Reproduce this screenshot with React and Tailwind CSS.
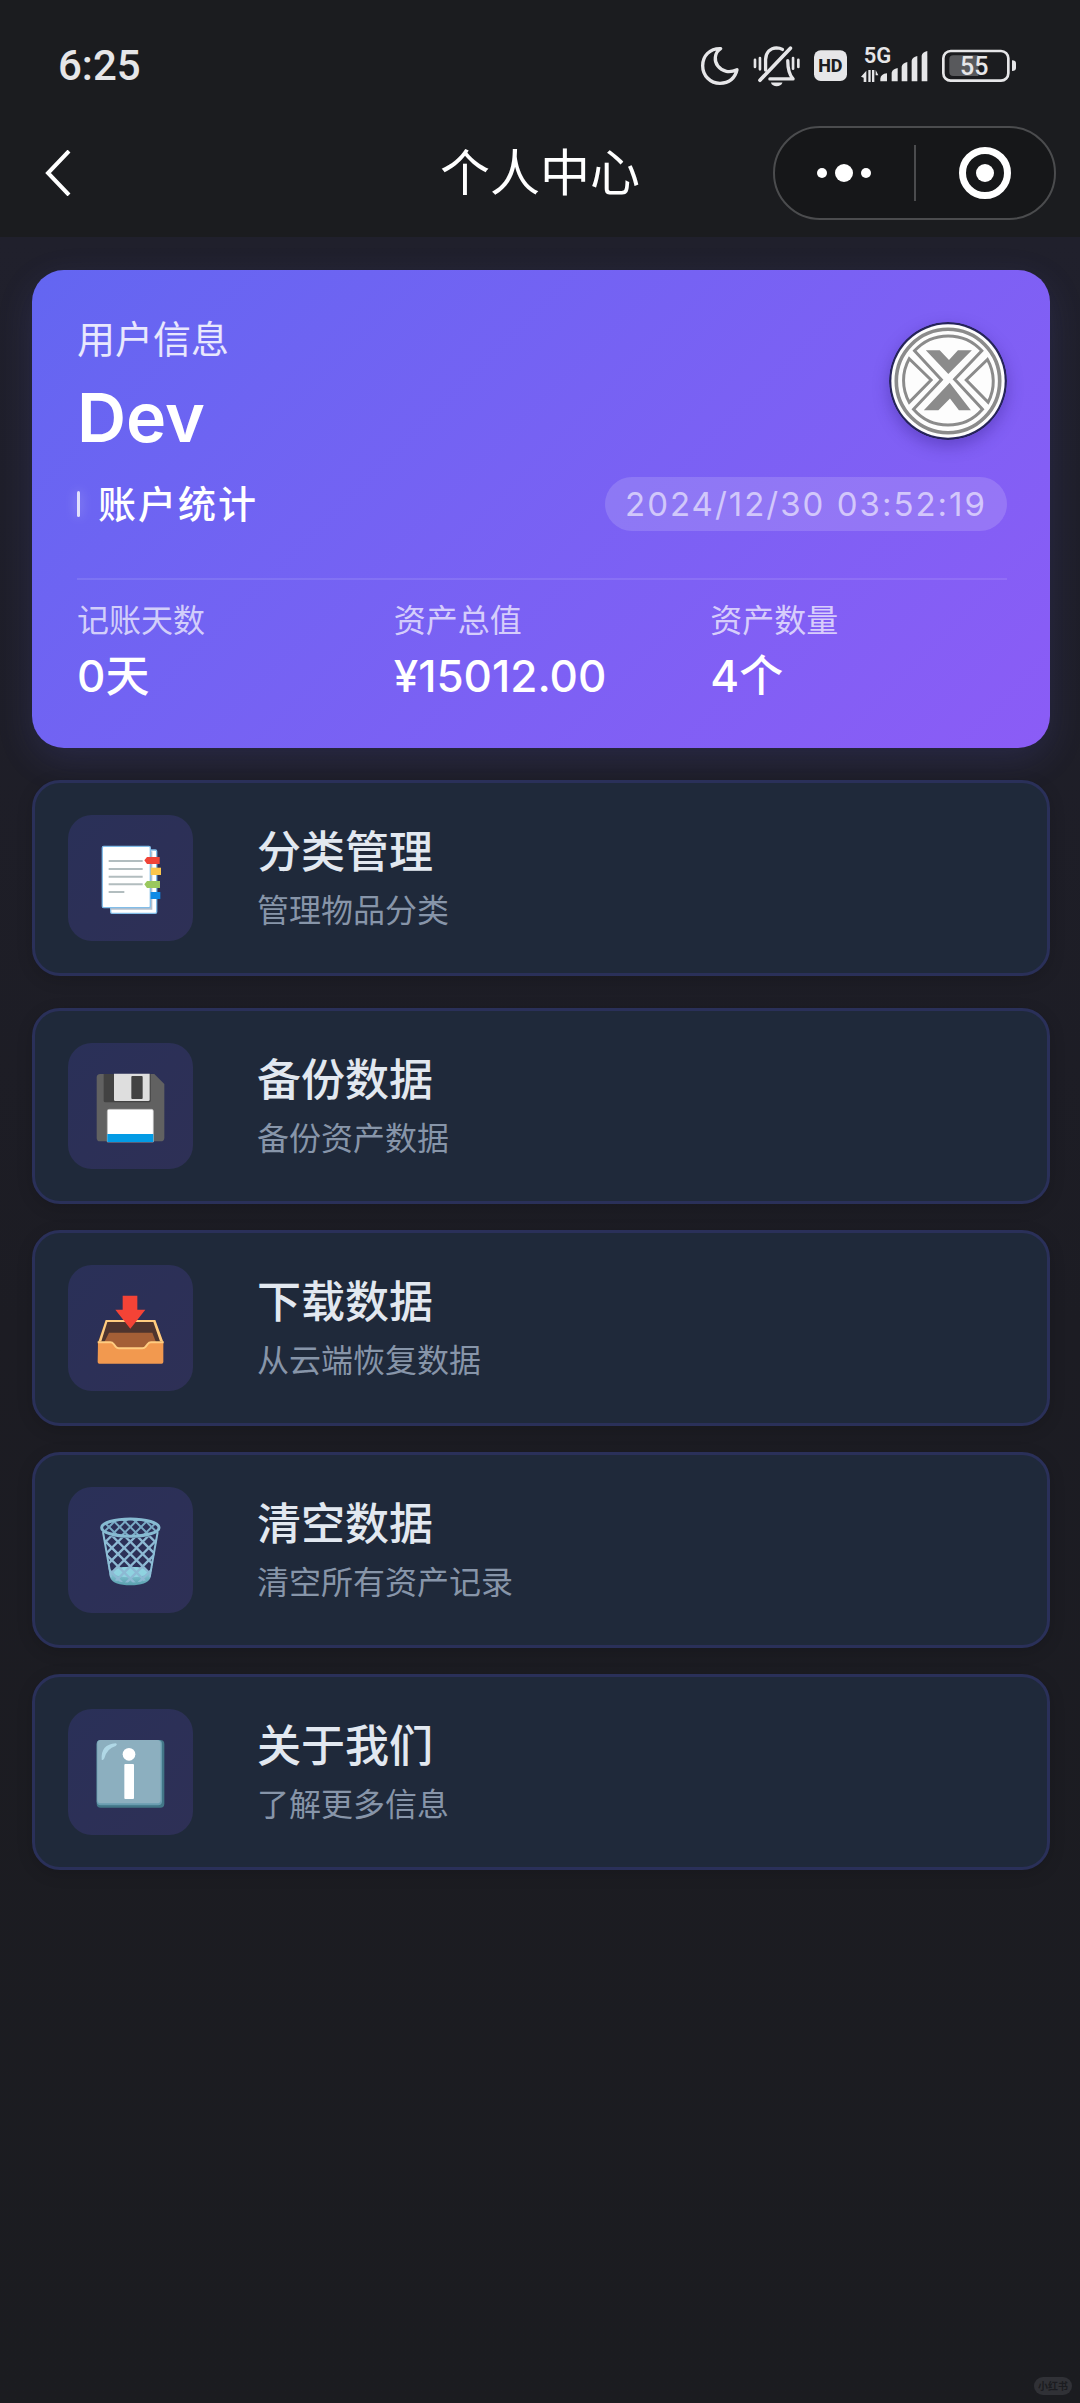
// App.jsx
import React from 'react';

const FG = "#e6e6e8";

function StatusBar() {
  return (
    <div className="flex h-[126px] items-center justify-between pt-1.5 pr-16 pl-[58px] font-['Roboto',sans-serif]">
      <span className="text-[42px] leading-none font-medium text-[#e6e6e8]">6:25</span>
      <div className="flex items-center gap-3.5">
        {/* Do not disturb */}
        <svg className="h-[41px] w-[38px]" viewBox="122 78 114 123" fill="none" stroke={FG} strokeWidth="10" strokeLinejoin="round">
          <path d="M181 86 C148 85 127 108 127 137 C127 167 150 190 179 190 C206 190 225 174 230 149 C219 154 207 156 198 154 C176 149 163 131 165 112 C166 101 171 92 181 86 Z" />
        </svg>
        {/* Muted bell */}
        <svg className="h-[41px] w-[47px]" viewBox="281 78 142 123" fill="none" stroke={FG} strokeWidth="10" strokeLinecap="round">
          <path d="M302 181 L394 84" strokeWidth="11" />
          <path d="M319 150 V118 C320 96 334 84 352 83 C359 83 365 85 370 88" />
          <path d="M332 177 H402 C392 166 386 150 386 122" strokeLinejoin="round" />
          <path d="M287 119 V141 M302 114 V148 M402 114 V146 M418 119 V141" strokeWidth="8" />
          <path d="M335 188 H370 C366 203 339 203 335 188 Z" fill={FG} stroke="none" />
        </svg>
        {/* HD voice */}
        <svg className="h-[41px] w-[33px]" viewBox="465 78 99 123">
          <rect x="465" y="91" width="99" height="92" rx="20" fill={FG} />
          <text x="514" y="156" textAnchor="middle" fontSize="54" fontWeight="800" fill="#1b1c20">HD</text>
        </svg>
        {/* Signal */}
        <svg className="h-[41px] w-[67px] overflow-visible" viewBox="602 78 201 123" fill={FG}>
          <text x="610" y="129" fontSize="66" fontWeight="600">5G</text>
          <path d="M618 152 V186 H610 V173 L602 170 Z M624 150 H631 V186 H624 Z M635 150 H642 V186 H635 Z M646 150 L654 166 H646 Z" />
          <path d="M660 184 V176 Q661 162 680 160 V184 Z" />
          <path d="M694 184 V158 Q696 147 712 144 V184 Z" />
          <path d="M724 184 V140 Q726 129 741 126 V184 Z" />
          <path d="M754 184 V122 Q756 111 771 108 V184 Z" />
          <path d="M784 184 V107 Q786 96 801 93 V184 Z" />
        </svg>
        {/* Battery */}
        <svg className="h-[41px] w-[74px]" viewBox="844 78 222 123">
          <rect x="848" y="93" width="195" height="89" rx="22" fill="none" stroke={FG} strokeWidth="8" />
          <path d="M878 106 H953 V168 H878 Q866 168 866 156 V118 Q866 106 878 106 Z" fill="#58595c" />
          <path d="M1054 121 Q1066 121 1066 130 V144 Q1066 153 1054 153 Z" fill={FG} />
          <text x="941" y="164" textAnchor="middle" fontSize="75" fontWeight="500" fill={FG}>55</text>
        </svg>
      </div>
    </div>
  );
}

function NavBar() {
  return (
    <div className="grid h-[94px] grid-cols-[1fr_auto_1fr] items-center px-6">
      <button aria-label="返回" className="justify-self-start px-5">
        <svg className="h-[46px] w-[27px]" viewBox="0 0 27 46" fill="none" stroke="#fff" strokeWidth="4">
          <path d="M25 1 L4 23 L25 45" />
        </svg>
      </button>
      <h1 className="text-[50px] leading-none text-white">个人中心</h1>
      <div className="flex h-[94px] w-[283px] items-center justify-self-end rounded-full border-2 border-[#4b4c4e] bg-[#161719]">
        <button aria-label="更多" className="flex flex-1 items-center justify-center gap-2">
          <span className="size-2.5 rounded-full bg-white"></span>
          <span className="size-[18px] rounded-full bg-white"></span>
          <span className="size-2.5 rounded-full bg-white"></span>
        </button>
        <span className="h-14 w-0.5 bg-[#4b4c4e]"></span>
        <button aria-label="关闭" className="flex flex-1 items-center justify-center">
          <span className="flex size-[52px] items-center justify-center rounded-full border-[7px] border-white">
            <span className="size-[18px] rounded-full bg-white"></span>
          </span>
        </button>
      </div>
    </div>
  );
}

function Avatar() {
  return (
    <svg className="mt-[7px] size-[118px] rounded-full shadow-[0_6px_16px_rgba(40,20,120,0.35)]" viewBox="54 35 356 356" fill="none" stroke="#8b8b8b" strokeWidth="9">
      <circle cx="232" cy="213" r="178" fill="#26245a" stroke="none" />
      <circle cx="232" cy="213" r="171" fill="#fdfdfd" stroke="none" />
      <circle cx="232" cy="213" r="156" strokeWidth="11" />
      <path d="M131 122 A137 137 0 0 1 334 122 L252 208 L336 298 A137 137 0 0 1 128 298 L212 209 Z" />
      <path d="M115 146 L181 210 L115 277 A134 134 0 0 1 115 146 Z" />
      <path d="M351 148 L287 210 L353 277 A134 134 0 0 0 351 148 Z" />
      <path d="M165 120 H207 L235 150 L262 120 H304 L233 192 Z" fill="#8b8b8b" stroke="none" />
      <path d="M159 301 L237 218 L301 301 H265 L238 266 L203 301 Z" fill="#8b8b8b" stroke="none" />
    </svg>
  );
}

const stats = [
  { label: "记账天数", value: "0天" },
  { label: "资产总值", value: "¥15012.00" },
  { label: "资产数量", value: "4个" },
];

function UserCard() {
  return (
    <section className="rounded-[32px] bg-linear-135 from-[#6366f1] to-[#8b5cf6] pt-[45px] pr-[43px] pb-[42px] pl-[45px] shadow-[0_12px_36px_rgba(99,102,241,0.15)]">
      <div className="flex items-start justify-between">
        <div>
          <p className="text-[38px] leading-[48px] text-white/85">用户信息</p>
          <p className="mt-3 text-[68px] leading-[84px] font-semibold text-white">Dev</p>
        </div>
        <Avatar />
      </div>
      <div className="mt-[18px] flex items-center justify-between">
        <h2 className="flex items-center gap-[18px] text-[38px] leading-[48px] font-medium tracking-[2px] text-white">
          <span className="h-[26px] w-[3px] rounded-full bg-white/80 shadow-[0_0_12px_rgba(255,255,255,0.4)]"></span>
          账户统计
        </h2>
        <time className="rounded-full bg-white/15 px-5 text-[33px] leading-[54px] tracking-[2px] text-white/60">2024/12/30 03:52:19</time>
      </div>
      <div className="mt-[47px] grid grid-cols-3 gap-5 border-t-2 border-white/10 pt-5">
        {stats.map((s) => (
          <div key={s.label}>
            <p className="text-[32px] leading-[42px] text-white/70">{s.label}</p>
            <p className="mt-1 text-[44px] leading-[60px] font-medium text-white">{s.value}</p>
          </div>
        ))}
      </div>
    </section>
  );
}

function TabsIcon() {
  return (
    <svg className="size-full" viewBox="143 135 375 378">
      <rect x="271" y="240" width="138" height="190" rx="4" fill="#fff" stroke="#82bde8" strokeWidth="4" />
      <path d="M389 244 H396 V419 H271 V413 H389 Z" fill="#b5bfcc" />
      <rect x="246" y="229" width="144" height="184" rx="4" fill="#fff" stroke="#82bde8" strokeWidth="4" />
      <path d="M265 273 H367 M265 297 H367 M265 320 H367 M265 343 H367 M265 366 H312" stroke="#b2bdbf" strokeWidth="6" />
      <path d="M380 261 H418 V282 H380 L372 271 Z" fill="#f04438" />
      <path d="M391 293 H422 V315 H391 Z" fill="#fbc64c" />
      <path d="M380 333 H419 V354 H380 L372 343 Z" fill="#9ac85e" />
      <path d="M391 366 H420 V387 H391 Z" fill="#0d8ae6" />
    </svg>
  );
}

function FloppyIcon() {
  return (
    <svg className="size-full" viewBox="143 129 375 378">
      <path d="M240 222 H402 L432 252 V413 Q432 424 421 424 H239 Q229 424 229 413 V233 Q229 222 240 222 Z" fill="#616161" />
      <path d="M250 222 H391 V302 Q391 307 386 307 H255 Q250 307 250 302 Z" fill="#424242" />
      <path d="M281 221 H388 V299 Q388 303 384 303 H285 Q281 303 281 299 Z" fill="#dedede" />
      <rect x="333" y="228" width="34" height="69" rx="3" fill="#424242" />
      <path d="M266 328 H394 Q399 328 399 333 V426 H261 V333 Q261 328 266 328 Z" fill="#fff" stroke="#bdbdbd" strokeWidth="2" />
      <rect x="261" y="402" width="138" height="24" fill="#039be5" />
    </svg>
  );
}

function InboxIcon() {
  return (
    <svg className="size-full" viewBox="143 133 375 378">
      <path d="M256 298 H405 L429 364 V380 H232 V364 Z" fill="#4e342e" />
      <path d="M266 336 H396 L410 372 L386 384 H276 L248 372 Z" fill="#a45f36" />
      <path d="M234 364 L256 298 H405 L429 364 L419 362 L399 304 H261 L243 362 Z" fill="#ffcc80" />
      <path d="M233 364 H270 Q276 364 280 370 L286 378 Q290 383 296 383 H366 Q372 383 376 378 L382 369 Q386 364 392 364 H429 V424 Q429 429 424 429 H237 Q232 429 232 424 Z" fill="#f2994f" />
      <path d="M232 365 H270 Q276 365 280 370 L286 378 Q290 383 296 383 H366 Q372 383 376 378 L382 370 Q386 365 392 365 H430" fill="none" stroke="#ffcc80" strokeWidth="6" />
      <path d="M307 225 H351 V267 H375 L330 324 L285 267 H307 Z" fill="#f44336" />
    </svg>
  );
}

function TrashIcon() {
  return (
    <svg className="size-full" viewBox="143 141 375 378">
      <defs>
        <linearGradient id="bin" x1="0" y1="0" x2="0" y2="1">
          <stop offset="0" stopColor="#9ad9e6" />
          <stop offset="1" stopColor="#5a9fae" />
        </linearGradient>
        <clipPath id="basket">
          <path d="M248 283 Q330 306 412 283 L390 416 Q330 440 270 416 Z" />
        </clipPath>
        <clipPath id="opening">
          <ellipse cx="330" cy="262" rx="84" ry="24" />
        </clipPath>
      </defs>
      <path d="M272 400 Q280 380 330 380 Q380 380 388 400 L390 414 Q380 436 330 436 Q280 436 270 414 Z" fill="url(#bin)" />
      <ellipse cx="330" cy="396" rx="54" ry="16" fill="#8fd3e0" />
      <g clipPath="url(#basket)" stroke="#8db9d3" strokeWidth="7" fill="none">
        <path d="M110 270 L270 430 M147 270 L307 430 M184 270 L344 430 M221 270 L381 430 M258 270 L418 430 M295 270 L455 430 M332 270 L492 430 M369 270 L529 430" />
        <path d="M550 270 L390 430 M513 270 L353 430 M476 270 L316 430 M439 270 L279 430 M402 270 L242 430 M365 270 L205 430 M328 270 L168 430 M291 270 L131 430" />
      </g>
      <g clipPath="url(#opening)" stroke="#79a9c4" strokeWidth="6" fill="none">
        <path d="M240 235 L300 295 M272 235 L332 295 M304 235 L364 295 M336 235 L396 295 M368 235 L428 295" />
        <path d="M292 235 L232 295 M324 235 L264 295 M356 235 L296 295 M388 235 L328 295 M420 235 L360 295" />
      </g>
      <path d="M248 276 L272 412 M412 276 L388 412" stroke="#8cbfd6" strokeWidth="6" />
      <ellipse cx="330" cy="263" rx="86" ry="26" fill="none" stroke="#87bbd2" strokeWidth="9" />
    </svg>
  );
}

function InfoIcon() {
  return (
    <svg className="size-full" viewBox="143 144 375 378">
      <rect x="229" y="237" width="203" height="203" rx="12" fill="#427687" />
      <rect x="229" y="237" width="196" height="196" rx="12" fill="#6a9db0" />
      <rect x="231" y="237" width="190" height="190" rx="11" fill="#8cafbf" />
      <path d="M244 296 Q241 250 286 247 Q293 249 286 255 Q260 262 252 292 Q248 300 244 296 Z" fill="#b0d8e6" />
      <circle cx="326" cy="280" r="19" fill="#fff" />
      <rect x="312" y="309" width="29" height="105" rx="3" fill="#fff" />
    </svg>
  );
}

const menu = [
  { title: "备份数据", desc: "备份资产数据", icon: <FloppyIcon /> },
  { title: "下载数据", desc: "从云端恢复数据", icon: <InboxIcon /> },
  { title: "清空数据", desc: "清空所有资产记录", icon: <TrashIcon /> },
  { title: "关于我们", desc: "了解更多信息", icon: <InfoIcon /> },
];

function MenuItem({ title, desc, icon }) {
  return (
    <button className="flex w-full items-center rounded-[28px] border-[3px] border-[#2a3059] bg-[#1f293a] px-[33px] py-8 text-left shadow-[0_4px_16px_rgba(0,0,0,0.15)]">
      <span className="h-[126px] w-[125px] shrink-0 rounded-3xl bg-linear-135 from-[#2a3058] to-[#2e3056]">{icon}</span>
      <span className="ml-16 flex flex-col gap-1">
        <span className="text-[44px] leading-[62px] font-medium text-[#e2e8f0]">{title}</span>
        <span className="text-[32px] leading-[48px] text-[#8795a9]">{desc}</span>
      </span>
    </button>
  );
}

function App() {
  return (
    <div className="relative flex min-h-screen flex-col bg-[#1b1c20] font-['Inter','Noto_Sans_CJK_SC',sans-serif]">
      <header className="bg-[#1b1c1f] pb-[17px]">
        <StatusBar />
        <NavBar />
      </header>
      <main className="flex-1 bg-linear-to-b from-[#20202c] via-[#1c1c23] via-50% to-[#1b1c20] pt-[33px] pr-[30px] pl-8">
        <UserCard />
        <div className="mt-8">
          <MenuItem title="分类管理" desc="管理物品分类" icon={<TabsIcon />} />
        </div>
        <div className="mt-8 flex flex-col gap-[26px]">
          {menu.map((m) => (
            <MenuItem key={m.title} title={m.title} desc={m.desc} icon={m.icon} />
          ))}
        </div>
      </main>
      <span className="absolute right-2 bottom-2 rounded-full bg-[#303136] px-1 text-[10px] leading-[18px] font-bold text-[#1b1c20]">小红书</span>
    </div>
  );
}

export default App;
